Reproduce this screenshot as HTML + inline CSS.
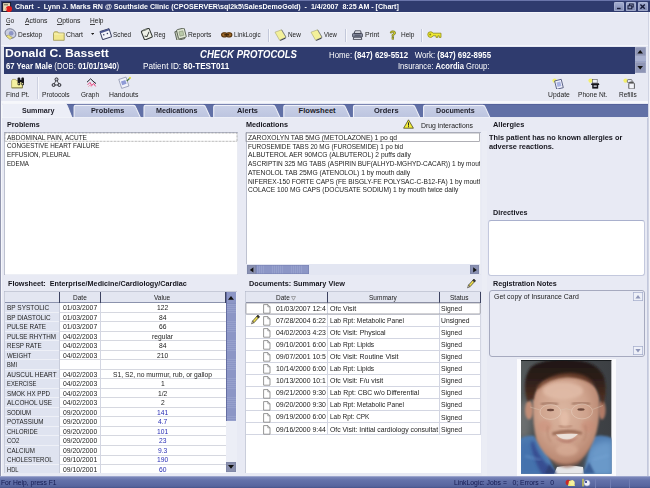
<!DOCTYPE html>
<html><head><meta charset="utf-8"><title>Chart</title>
<style>
html,body{margin:0;padding:0;background:#e5e8f3;}
body{width:650px;height:488px;position:relative;overflow:hidden;font-family:"Liberation Sans",sans-serif;}
#app{position:absolute;left:0;top:0;width:650px;height:488px;overflow:hidden;}
#app div,#app svg,#app span.t{position:absolute;}
span.t{white-space:nowrap;line-height:1;transform-origin:0 50%;}
span.t b{font-weight:bold;}
span.t u{text-decoration:underline;text-underline-offset:0.5px;text-decoration-thickness:0.6px;}
</style></head><body><div id="app">
<div style="left:0px;top:0px;width:650px;height:12.3px;background:#2f3b6e;"></div>
<div style="left:0px;top:0px;width:650px;height:0.8px;background:#6a75aa;"></div>
<div style="left:0px;top:0px;width:0.9px;height:12.3px;background:#6a75aa;"></div>
<span class="t" style="left:15.00px;top:2.93px;font-size:7.3px;color:#fff;font-weight:bold;transform:scaleX(0.9710);white-space:pre;">Chart  -  Lynn J. Marks RN @ Southside Clinic (CPOSERVER\sql2k5\SalesDemoGold)  -  1/4/2007  8:25 AM - [Chart]</span>
<svg style="left:1.6px;top:1.6px" width="11" height="10.5" viewBox="0 0 11 10.5"><rect x="0.6" y="0.6" width="8" height="9" fill="#e6d9b8" stroke="#14162c" stroke-width="1"/><rect x="2" y="2" width="4" height="1.4" fill="#8f8a70"/><circle cx="7" cy="7" r="3.1" fill="#e21a1a"/><circle cx="4" cy="7" r="1" fill="#f0a080"/></svg>
<div style="left:614.3px;top:2.2px;width:9.7px;height:8.9px;background:#929cc2;border-radius:1.6px;background:linear-gradient(#a6b0d2,#7f89b2);box-shadow:inset 0 0 0 0.5px #b9c1dc;"></div>
<div style="left:626.1px;top:2.2px;width:9.7px;height:8.9px;background:#929cc2;border-radius:1.6px;background:linear-gradient(#a6b0d2,#7f89b2);box-shadow:inset 0 0 0 0.5px #b9c1dc;"></div>
<div style="left:637.9px;top:2.2px;width:9.7px;height:8.9px;background:#929cc2;border-radius:1.6px;background:linear-gradient(#a6b0d2,#7f89b2);box-shadow:inset 0 0 0 0.5px #b9c1dc;"></div>
<svg style="left:614.3px;top:2.2px" width="34" height="9" viewBox="0 0 34 9"><rect x="3" y="5.8" width="3.6" height="1.4" fill="#151a38"/><rect x="15.4" y="2" width="3.8" height="3" fill="none" stroke="#151a38" stroke-width="1"/><rect x="14" y="3.8" width="3.8" height="3" fill="#8d97be" stroke="#151a38" stroke-width="1"/><path d="M26.4 2.4 L30.8 6.8 M30.8 2.4 L26.4 6.8" stroke="#151a38" stroke-width="1.4"/></svg>
<div style="left:0px;top:12.3px;width:650px;height:34.2px;background:#e7e9f3;"></div>
<div style="left:0px;top:12.3px;width:650px;height:0.8px;background:#f4f5fa;"></div>
<span class="t" style="left:6.00px;top:16.93px;font-size:7.3px;color:#222;transform:scaleX(0.8215);">Go</span>
<div style="left:6.2px;top:24.1px;width:4.2646px;height:0.6px;background:#444;"></div>
<span class="t" style="left:24.50px;top:16.93px;font-size:7.3px;color:#222;transform:scaleX(0.9399);">Actions</span>
<div style="left:24.7px;top:24.1px;width:4.17654px;height:0.6px;background:#444;"></div>
<span class="t" style="left:56.50px;top:16.93px;font-size:7.3px;color:#222;transform:scaleX(0.9341);">Options</span>
<div style="left:56.7px;top:24.1px;width:4.90379px;height:0.6px;background:#444;"></div>
<span class="t" style="left:90.00px;top:16.93px;font-size:7.3px;color:#222;transform:scaleX(0.8992);">Help</span>
<div style="left:90.2px;top:24.1px;width:4.34033px;height:0.6px;background:#444;"></div>
<span class="t" style="left:18.30px;top:30.93px;font-size:7.3px;color:#222;transform:scaleX(0.9037);">Desktop</span>
<span class="t" style="left:66.00px;top:30.93px;font-size:7.3px;color:#222;transform:scaleX(0.9523);">Chart</span>
<span class="t" style="left:113.00px;top:30.93px;font-size:7.3px;color:#222;transform:scaleX(0.8696);">Sched</span>
<span class="t" style="left:154.00px;top:30.93px;font-size:7.3px;color:#222;transform:scaleX(0.8512);">Reg</span>
<span class="t" style="left:188.00px;top:30.93px;font-size:7.3px;color:#222;transform:scaleX(0.9154);">Reports</span>
<span class="t" style="left:234.00px;top:30.93px;font-size:7.3px;color:#222;transform:scaleX(0.8624);">LinkLogic</span>
<span class="t" style="left:288.00px;top:30.93px;font-size:7.3px;color:#222;transform:scaleX(0.8765);">New</span>
<span class="t" style="left:324.00px;top:30.93px;font-size:7.3px;color:#222;transform:scaleX(0.8157);">View</span>
<span class="t" style="left:364.70px;top:30.93px;font-size:7.3px;color:#222;transform:scaleX(0.9527);">Print</span>
<span class="t" style="left:400.80px;top:30.93px;font-size:7.3px;color:#222;transform:scaleX(0.8925);">Help</span>
<div style="left:268px;top:28.5px;width:0.8px;height:13px;background:#c3c8da;"></div>
<div style="left:268.8px;top:28.5px;width:0.8px;height:13px;background:#f6f7fb;"></div>
<div style="left:345px;top:28.5px;width:0.8px;height:13px;background:#c3c8da;"></div>
<div style="left:345.8px;top:28.5px;width:0.8px;height:13px;background:#f6f7fb;"></div>
<div style="left:421px;top:28.5px;width:0.8px;height:13px;background:#c3c8da;"></div>
<div style="left:421.8px;top:28.5px;width:0.8px;height:13px;background:#f6f7fb;"></div>
<svg style="left:4px;top:28px" width="13" height="12" viewBox="0 0 13 12"><ellipse cx="6.5" cy="5.5" rx="5.6" ry="4.6" fill="#c9cde0" stroke="#6a6f86" stroke-width="0.8" transform="rotate(25 6.5 5.5)"/><circle cx="7.2" cy="5.2" r="2.3" fill="#8d95c4"/><path d="M2 8 L6 11.5 L8.5 9.5 L4.5 7Z" fill="#ece27d" stroke="#8a8350" stroke-width="0.5"/></svg>
<svg style="left:52.5px;top:30.5px" width="12" height="10" viewBox="0 0 12 10"><path d="M0.5 2.2 L1.5 0.8 L4.6 0.8 L5.4 2 L11.2 2 L11.2 9.3 L0.5 9.3Z" fill="#f1e78e" stroke="#9a934d" stroke-width="0.8"/><path d="M1.2 3 L10.5 3" stroke="#fbf7c8" stroke-width="0.8"/></svg>
<svg style="left:90.9px;top:33.4px" width="3.2" height="2.4" viewBox="0 0 3.2 2.4"><path d="M0 0 L3.2 0 L1.6 2Z" fill="#222"/></svg>
<svg style="left:99px;top:28px" width="13" height="12" viewBox="0 0 13 12"><g transform="rotate(-18 6.5 6)"><rect x="2" y="2" width="9.5" height="8.5" fill="#f4f5fb" stroke="#33395c" stroke-width="0.9"/><rect x="2" y="2" width="9.5" height="1.8" fill="#4a5590"/><rect x="4" y="5.5" width="1.3" height="1.3" fill="#33395c"/><rect x="7.8" y="5.5" width="1.3" height="1.3" fill="#33395c"/></g></svg>
<svg style="left:139.5px;top:28px" width="13" height="12" viewBox="0 0 13 12"><g transform="rotate(-22 6.5 6)"><rect x="2.5" y="1.5" width="8.5" height="9.5" rx="1" fill="#eef0e6" stroke="#2e3330" stroke-width="1"/><path d="M4 7.2 L6 8.6 L9.6 5" stroke="#2e3330" stroke-width="0.9" fill="none"/><rect x="4.8" y="0.6" width="4" height="1.8" fill="#777d74"/></g></svg>
<svg style="left:174px;top:28px" width="13" height="12" viewBox="0 0 13 12"><g transform="rotate(-14 6.5 6)"><rect x="1.5" y="2.5" width="8" height="9" fill="#c9d0bd" stroke="#4c5447" stroke-width="0.8"/><rect x="3.5" y="1" width="8" height="9.5" rx="1" fill="#dfe6d2" stroke="#4c5447" stroke-width="0.8"/><rect x="5.5" y="3.5" width="4" height="4.5" fill="#b9c9a8" stroke="#7d8b70" stroke-width="0.5"/></g></svg>
<svg style="left:221px;top:31.5px" width="11.5" height="6" viewBox="0 0 11.5 6"><rect x="0.6" y="0.8" width="5.6" height="4" rx="2" fill="#a56f2d" stroke="#5a350c" stroke-width="1.2"/><rect x="5.2" y="0.8" width="5.6" height="4" rx="2" fill="#a56f2d" stroke="#5a350c" stroke-width="1.2"/><rect x="3.3" y="2.1" width="4.8" height="1.4" fill="#3a2208"/></svg>
<svg style="left:273.5px;top:28.5px" width="13" height="12" viewBox="0 0 13 12"><path d="M1 3.2 L7.6 0.8 L12 8.2 L5.6 11.2Z" fill="#f3f09a" stroke="#a6a670" stroke-width="0.6"/><path d="M5.6 11.2 L12 8.2 L11.4 9.8 L6.6 11.8Z" fill="#3b3f4e"/><path d="M7.6 0.8 L12 8.2" stroke="#6b6f7e" stroke-width="0.7"/></svg>
<svg style="left:309.5px;top:28.5px" width="13" height="12" viewBox="0 0 13 12"><path d="M1 3.2 L7.6 0.8 L12 8.2 L5.6 11.2Z" fill="#f3f09a" stroke="#a6a670" stroke-width="0.6"/><path d="M5.6 11.2 L12 8.2 L11.4 9.8 L6.6 11.8Z" fill="#3b3f4e"/><path d="M7.6 0.8 L12 8.2" stroke="#6b6f7e" stroke-width="0.7"/></svg>
<svg style="left:352px;top:29.5px" width="11" height="10" viewBox="0 0 11 10"><path d="M3 0.8 L8.6 0.8 L9.2 3.4 L2.2 3.4Z" fill="#f4f5fa" stroke="#2d3140" stroke-width="0.8"/><rect x="0.6" y="3.4" width="9.8" height="3.8" rx="0.8" fill="#8b90a3" stroke="#2d3140" stroke-width="0.8"/><path d="M1.8 7.2 L9.2 7.2 L9.8 9.4 L1.2 9.4Z" fill="#e8eaf2" stroke="#2d3140" stroke-width="0.8"/><path d="M2.5 5.2 L8.5 5.2" stroke="#2d3140" stroke-width="0.7"/></svg>
<svg style="left:389px;top:29.5px" width="8" height="10" viewBox="0 0 8 10"><path d="M1.2 3 Q1.2 0.8 3.8 0.8 Q6.6 0.8 6.6 3 Q6.6 4.4 4.6 5.2 L4.6 6.6 L3 6.6 L3 4.6 Q4.8 3.9 4.8 3 Q4.8 2.2 3.8 2.2 Q2.9 2.2 2.9 3Z" fill="#d9d22e" stroke="#6d7320" stroke-width="0.7"/><rect x="3" y="7.5" width="1.7" height="1.7" fill="#d9d22e" stroke="#6d7320" stroke-width="0.6"/></svg>
<svg style="left:426.5px;top:31.3px" width="15" height="7.5" viewBox="0 0 15 7.5"><path d="M0.8 3.4 Q0.8 0.8 3.4 0.8 Q5.6 0.8 6 2.2 L14 2.2 L14 6.4 L12.2 6.4 L12.2 4.8 L10.8 4.8 L10.8 6.4 L9 6.4 L9 4.8 L6 4.8 Q5.4 6.4 3.4 6.4 Q0.8 6.4 0.8 3.4Z" fill="#efe92f" stroke="#8d8a1c" stroke-width="0.8"/><circle cx="3.2" cy="3.5" r="1" fill="#8d8a1c"/></svg>
<div style="left:4px;top:46.5px;width:631.2px;height:27px;background:#2f3b6e;"></div>
<div style="left:0px;top:45.3px;width:650px;height:1.2px;background:#f3f4f9;"></div>
<span class="t" style="left:5.00px;top:48.24px;font-size:11.8px;color:#fff;font-weight:bold;transform:scaleX(1.0280);">Donald C. Bassett</span>
<span class="t" style="left:6.00px;top:62.35px;font-size:8.5px;color:#fff;transform:scaleX(0.9081);"><b>67 Year Male</b> (DOB: <b>01/01/1940</b>)</span>
<span class="t" style="left:143.00px;top:62.35px;font-size:8.5px;color:#fff;transform:scaleX(0.9597);">Patient ID: <b>80-TEST011</b></span>
<span class="t" style="left:199.50px;top:49.72px;font-size:10px;color:#fff;font-weight:bold;font-style:italic;transform:scaleX(0.9557);">CHECK PROTOCOLS</span>
<span class="t" style="left:329.00px;top:50.85px;font-size:8.5px;color:#fff;transform:scaleX(0.9250);white-space:pre;">Home: <b>(847) 629-5512</b>   Work: <b>(847) 692-8955</b></span>
<span class="t" style="left:397.50px;top:62.35px;font-size:8.5px;color:#fff;transform:scaleX(0.8942);">Insurance: <b>Acordia</b> Group:</span>
<div style="left:635.4px;top:46.6px;width:10.4px;height:26.2px;background:#a9b1d0;background:repeating-linear-gradient(#a9b1d0 0,#a9b1d0 1.2px,#9aa3c6 1.2px,#9aa3c6 1.9px);"></div>
<div style="left:635.4px;top:46.6px;width:10.4px;height:9px;background:#8e95b5;box-shadow:inset 0 0 0 0.6px #a8aec8;"></div>
<div style="left:635.4px;top:62.2px;width:10.4px;height:10.6px;background:#8e95b5;box-shadow:inset 0 0 0 0.6px #a8aec8;"></div>
<svg style="left:635.4px;top:46.6px" width="10.4" height="9" viewBox="0 0 10.4 9"><path d="M2.4 6.4 L8 6.4 L5.2 3Z" fill="#111"/></svg>
<svg style="left:635.4px;top:62.2px" width="10.4" height="10.6" viewBox="0 0 10.4 10.6"><path d="M2.4 4 L8 4 L5.2 7.6Z" fill="#111"/></svg>
<div style="left:0px;top:74px;width:650px;height:27px;background:#e7e9f3;"></div>
<span class="t" style="left:5.80px;top:91.03px;font-size:7.3px;color:#222;transform:scaleX(0.9342);">Find Pt.</span>
<span class="t" style="left:42.00px;top:91.03px;font-size:7.3px;color:#222;transform:scaleX(0.9103);">Protocols</span>
<span class="t" style="left:81.30px;top:91.03px;font-size:7.3px;color:#222;transform:scaleX(0.8872);">Graph</span>
<span class="t" style="left:108.50px;top:91.03px;font-size:7.3px;color:#222;transform:scaleX(0.9408);">Handouts</span>
<span class="t" style="left:547.50px;top:91.03px;font-size:7.3px;color:#222;transform:scaleX(0.9261);">Update</span>
<span class="t" style="left:578.00px;top:91.03px;font-size:7.3px;color:#222;transform:scaleX(0.9087);">Phone Nt.</span>
<span class="t" style="left:619.00px;top:91.03px;font-size:7.3px;color:#222;transform:scaleX(0.8905);">Refills</span>
<div style="left:37px;top:76.5px;width:0.8px;height:22px;background:#cdd1e0;"></div>
<div style="left:37.8px;top:76.5px;width:0.8px;height:22px;background:#f6f7fb;"></div>
<svg style="left:11px;top:77.4px" width="14.5" height="11.6" viewBox="0 0 14.5 11.6"><path d="M0.6 3.8 L1.6 2.4 L4.6 2.4 L5.4 3.6 L11.4 3.6 L11.4 10.8 L0.6 10.8Z" fill="#f5f1a0" stroke="#a19a52" stroke-width="0.7"/><path d="M0.8 10.9 L11.5 10.9 L11.5 4" stroke="#6e6a36" stroke-width="0.7" fill="none"/><rect x="6.6" y="0.6" width="2.6" height="7.6" rx="0.9" fill="#15151b"/><rect x="10.4" y="0.6" width="2.6" height="7.6" rx="0.9" fill="#15151b"/><rect x="8.6" y="2.8" width="2.4" height="2.2" fill="#15151b"/><rect x="7.2" y="6" width="1.2" height="1.4" fill="#d8d48a"/><rect x="11" y="6" width="1.2" height="1.4" fill="#d8d48a"/></svg>
<svg style="left:50.5px;top:76.8px" width="11" height="10.5" viewBox="0 0 11 10.5"><path d="M5.5 2.5 L2.6 8 L8.4 8Z" stroke="#333" stroke-width="0.8" fill="none"/><circle cx="5.5" cy="2.4" r="1.5" fill="#c9ccd8" stroke="#1c1c22" stroke-width="0.9"/><circle cx="2.6" cy="8" r="1.5" fill="#c9ccd8" stroke="#1c1c22" stroke-width="0.9"/><circle cx="8.4" cy="8" r="1.5" fill="#c9ccd8" stroke="#1c1c22" stroke-width="0.9"/></svg>
<svg style="left:85.8px;top:77.6px" width="11" height="10.5" viewBox="0 0 11 10.5"><path d="M1 4.2 L4.6 0.8 L7 3.2 L10 5.6" stroke="#1c1c26" stroke-width="1" fill="none"/><path d="M1.6 6.8 L4 4.4 L5.8 7.6 L7.6 5.4 L9.6 8.4" stroke="#e8306e" stroke-width="0.9" fill="none"/><path d="M2.2 8.8 L4 7 L5.6 9.2" stroke="#f08aa8" stroke-width="0.7" fill="none"/></svg>
<svg style="left:117.5px;top:76.4px" width="13.5" height="12.4" viewBox="0 0 13.5 12.4"><g transform="rotate(-18 6 6.5)"><rect x="2" y="2" width="7.6" height="9.4" fill="#f0f2fa" stroke="#8a90ac" stroke-width="0.7"/><rect x="3.4" y="4.6" width="4.6" height="4" fill="#8f9bd6"/></g><path d="M8.4 4.6 L11.6 1.6 L12.4 2.4 L9.2 5.4Z" fill="#4b7a3b"/><circle cx="12" cy="1.8" r="1.1" fill="#e6e04a"/></svg>
<svg style="left:552px;top:77.5px" width="12.5" height="11.5" viewBox="0 0 12.5 11.5"><circle cx="2.6" cy="2.6" r="2.2" fill="#f3ef6a"/><g transform="rotate(-14 7 6.5)"><rect x="3.6" y="2" width="6.8" height="8.6" fill="#eef0fa" stroke="#4a5078" stroke-width="0.8"/><rect x="5" y="4" width="4" height="4.6" fill="#a9b3e2"/></g></svg>
<svg style="left:587.5px;top:77.5px" width="12.5" height="11.5" viewBox="0 0 12.5 11.5"><circle cx="2.6" cy="2.6" r="2.2" fill="#f3ef6a"/><rect x="4.6" y="1.4" width="4.6" height="3.6" fill="#eef0fa" stroke="#555" stroke-width="0.6"/><path d="M3.6 5.2 L10.8 5.2 L11.4 7 L3 7Z" fill="#15151a"/><rect x="4.2" y="6.8" width="6" height="3.8" fill="#15151a"/><rect x="5.6" y="7.4" width="3.2" height="1.4" fill="#d5d7e2"/></svg>
<svg style="left:622.5px;top:77.5px" width="12.5" height="11.5" viewBox="0 0 12.5 11.5"><circle cx="2.6" cy="2.6" r="2.2" fill="#f3ef6a"/><rect x="4.4" y="1.6" width="4.6" height="3" rx="0.8" fill="#eef0fa" stroke="#444" stroke-width="0.7"/><rect x="5.8" y="5" width="5.6" height="6" rx="0.8" fill="#f2f3f9" stroke="#333" stroke-width="0.8"/><rect x="6.6" y="3.6" width="4" height="1.6" fill="#555"/></svg>
<div style="left:0px;top:100.6px;width:650px;height:0.8px;background:#b9bed3;"></div>
<div style="left:0px;top:101.4px;width:650px;height:1.4px;background:#f6f7fb;"></div>
<div style="left:2px;top:103.7px;width:646px;height:13.7px;background:#6170a6;box-shadow:inset 0 0.8px 0 0 #525e97;"></div>
<div style="left:0px;top:102.8px;width:2.3px;height:374px;background:#f6f7fb;"></div>
<div style="left:0px;top:12.3px;width:0.9px;height:464px;background:#9296ae;"></div>
<svg style="left:0px;top:103px" width="650" height="15" viewBox="0 0 650 15"><defs><linearGradient id="tabg" x1="0" y1="0" x2="0" y2="1"><stop offset="0" stop-color="#c9d0e7"/><stop offset="1" stop-color="#bcc4df"/></linearGradient></defs><path d="M2 15 L2 2 Q2 0.4 3.6 0.4 L64.6 0.4 Q66.4 0.4 67.2 2.4 L72.2 15Z" fill="#eceef7" stroke="#fafafd" stroke-width="0.8"/><path d="M74.1 14.6 L74.1 4 Q74.1 2.4 75.7 2.4 L133.3 2.4 Q135.1 2.4 135.8 4.4 L140.4 14.6Z" fill="url(#tabg)" stroke="#eef0f8" stroke-width="1.1"/><path d="M144 14.6 L144 4 Q144 2.4 145.6 2.4 L203.2 2.4 Q205 2.4 205.7 4.4 L210.3 14.6Z" fill="url(#tabg)" stroke="#eef0f8" stroke-width="1.1"/><path d="M213.7 14.6 L213.7 4 Q213.7 2.4 215.3 2.4 L272.9 2.4 Q274.7 2.4 275.4 4.4 L280 14.6Z" fill="url(#tabg)" stroke="#eef0f8" stroke-width="1.1"/><path d="M283.8 14.6 L283.8 4 Q283.8 2.4 285.4 2.4 L343 2.4 Q344.8 2.4 345.5 4.4 L350.1 14.6Z" fill="url(#tabg)" stroke="#eef0f8" stroke-width="1.1"/><path d="M353.5 14.6 L353.5 4 Q353.5 2.4 355.1 2.4 L412.7 2.4 Q414.5 2.4 415.2 4.4 L419.8 14.6Z" fill="url(#tabg)" stroke="#eef0f8" stroke-width="1.1"/><path d="M423.6 14.6 L423.6 4 Q423.6 2.4 425.2 2.4 L482.8 2.4 Q484.6 2.4 485.3 4.4 L489.9 14.6Z" fill="url(#tabg)" stroke="#eef0f8" stroke-width="1.1"/></svg>
<span class="t" style="left:21.65px;top:106.69px;font-size:7.6px;color:#1d1d28;font-weight:bold;transform:scaleX(0.9383);">Summary</span>
<span class="t" style="left:90.55px;top:106.69px;font-size:7.6px;color:#1d1d28;font-weight:bold;transform:scaleX(0.9615);">Problems</span>
<span class="t" style="left:156.00px;top:106.69px;font-size:7.6px;color:#1d1d28;font-weight:bold;transform:scaleX(0.9426);">Medications</span>
<span class="t" style="left:236.50px;top:106.69px;font-size:7.6px;color:#1d1d28;font-weight:bold;transform:scaleX(0.9748);">Alerts</span>
<span class="t" style="left:298.50px;top:106.69px;font-size:7.6px;color:#1d1d28;font-weight:bold;">Flowsheet</span>
<span class="t" style="left:373.70px;top:106.69px;font-size:7.6px;color:#1d1d28;font-weight:bold;transform:scaleX(0.9871);">Orders</span>
<span class="t" style="left:436.35px;top:106.69px;font-size:7.6px;color:#1d1d28;font-weight:bold;transform:scaleX(0.9351);">Documents</span>
<div style="left:2px;top:117.6px;width:645.5px;height:359px;background:#e8eaf4;"></div>
<div style="left:647.6px;top:12.3px;width:2.4px;height:464px;background:#f1f2f8;"></div>
<div style="left:647.5px;top:12.3px;width:0.6px;height:464px;background:#d0d4e3;"></div>
<div style="left:646.6px;top:117.6px;width:0.9px;height:359px;background:#c3c8dc;"></div>
<div style="left:481.5px;top:131px;width:5.5px;height:345px;background:#ebedf5;"></div>
<span class="t" style="left:7.40px;top:120.59px;font-size:7.6px;color:#16161e;font-weight:bold;transform:scaleX(0.9441);">Problems</span>
<span class="t" style="left:246.40px;top:120.59px;font-size:7.6px;color:#16161e;font-weight:bold;transform:scaleX(0.9563);">Medications</span>
<span class="t" style="left:493.00px;top:120.59px;font-size:7.6px;color:#16161e;font-weight:bold;transform:scaleX(0.9750);">Allergies</span>
<span class="t" style="left:421.00px;top:121.93px;font-size:7.3px;color:#222;transform:scaleX(0.9423);">Drug interactions</span>
<svg style="left:403px;top:119px" width="11" height="10" viewBox="0 0 11 10"><path d="M5.5 0.8 L10.4 9.2 L0.6 9.2Z" fill="#f4ee3a" stroke="#4a4a20" stroke-width="0.8" stroke-linejoin="round"/><rect x="5" y="3.4" width="1" height="3.2" fill="#222"/><rect x="5" y="7.2" width="1" height="1" fill="#222"/></svg>
<div style="left:4px;top:132px;width:233.7px;height:143.3px;background:#fff;box-shadow:inset 0.7px 0.7px 0 0 #a3a8bd, inset -0.6px -0.6px 0 0 #dcdfeb;"></div>
<div style="left:245.5px;top:132px;width:235px;height:143.3px;background:#fff;box-shadow:inset 0.7px 0.7px 0 0 #a3a8bd, inset -0.6px -0.6px 0 0 #dcdfeb;"></div>
<svg style="left:3.9px;top:132px" width="234" height="10.3"><rect x="1" y="1" width="232" height="8.3" rx="0" fill="none" stroke="#555" stroke-width="0.6" stroke-dasharray="0.7 0.7"/></svg>
<svg style="left:245.4px;top:131.5px" width="235.4" height="10.6"><rect x="1" y="1" width="233.4" height="8.6" rx="0" fill="none" stroke="#8e8e96" stroke-width="0.7"/></svg>
<span class="t" style="left:6.80px;top:133.73px;font-size:7.3px;color:#222;transform:scaleX(0.8924);">ABDOMINAL PAIN, ACUTE</span>
<span class="t" style="left:6.80px;top:142.48px;font-size:7.3px;color:#222;transform:scaleX(0.8659);">CONGESTIVE HEART FAILURE</span>
<span class="t" style="left:6.80px;top:151.23px;font-size:7.3px;color:#222;transform:scaleX(0.8554);">EFFUSION, PLEURAL</span>
<span class="t" style="left:6.80px;top:159.98px;font-size:7.3px;color:#222;transform:scaleX(0.8474);">EDEMA</span>
<div style="left:246.5px;top:133px;width:233.3px;height:131px;overflow:hidden">
<span class="t" style="left:1.30px;top:0.93px;font-size:7.3px;color:#222;transform:scaleX(0.9242);">ZAROXOLYN TAB 5MG (METOLAZONE) 1 po qd</span>
<span class="t" style="left:1.30px;top:9.68px;font-size:7.3px;color:#222;transform:scaleX(0.8783);">FUROSEMIDE TABS 20 MG (FUROSEMIDE) 1 po bid</span>
<span class="t" style="left:1.30px;top:18.43px;font-size:7.3px;color:#222;transform:scaleX(0.9146);">ALBUTEROL AER 90MCG (ALBUTEROL) 2 puffs daily</span>
<span class="t" style="left:1.30px;top:27.18px;font-size:7.3px;color:#222;transform:scaleX(0.8916);">ASCRIPTIN 325 MG TABS (ASPIRIN BUF(ALHYD-MGHYD-CACAR)) 1 by mouth</span>
<span class="t" style="left:1.30px;top:35.93px;font-size:7.3px;color:#222;transform:scaleX(0.9212);">ATENOLOL TAB 25MG (ATENOLOL) 1 by mouth daily</span>
<span class="t" style="left:1.30px;top:44.68px;font-size:7.3px;color:#222;transform:scaleX(0.9066);">NIFEREX-150 FORTE CAPS (FE BISGLY-FE POLYSAC-C-B12-FA) 1 by mouth</span>
<span class="t" style="left:1.30px;top:53.43px;font-size:7.3px;color:#222;transform:scaleX(0.9068);">COLACE 100 MG CAPS (DOCUSATE SODIUM) 1 by mouth twice daily</span>
</div>
<div style="left:246.3px;top:264.4px;width:233.5px;height:10.2px;background:#e3e6f2;"></div>
<div style="left:246.6px;top:264.6px;width:9.6px;height:9.8px;background:#8a91b2;box-shadow:inset 0 0 0 0.6px #7b82a4;"></div>
<div style="left:256.2px;top:264.6px;width:53px;height:9.8px;background:#8c96c6;background:repeating-linear-gradient(90deg,#8c96c6 0,#8c96c6 1.3px,#97a1cd 1.3px,#97a1cd 1.9px);box-shadow:inset 0 0 0 0.6px #7680b2;"></div>
<div style="left:469.8px;top:264.6px;width:9.6px;height:9.8px;background:#8a91b2;box-shadow:inset 0 0 0 0.6px #7b82a4;"></div>
<svg style="left:246.6px;top:264.6px" width="9.6" height="9.8" viewBox="0 0 9.6 9.8"><path d="M6.4 2.2 L6.4 7.6 L2.8 4.9Z" fill="#111"/></svg>
<svg style="left:469.8px;top:264.6px" width="9.6" height="9.8" viewBox="0 0 9.6 9.8"><path d="M3.2 2.2 L3.2 7.6 L6.8 4.9Z" fill="#111"/></svg>
<span class="t" style="left:489.00px;top:133.78px;font-size:7.2px;color:#16161e;font-weight:bold;transform:scaleX(1.0204);">This patient has no known allergies or</span>
<span class="t" style="left:489.00px;top:143.08px;font-size:7.2px;color:#16161e;font-weight:bold;transform:scaleX(1.0279);">adverse reactions.</span>
<span class="t" style="left:493.00px;top:208.59px;font-size:7.6px;color:#16161e;font-weight:bold;transform:scaleX(0.9495);">Directives</span>
<div style="left:487.6px;top:219.7px;width:157.3px;height:56.6px;background:#fff;border:0.8px solid #c3c8dd;border-top-color:#a9b0cd;border-radius:3px;box-sizing:border-box;"></div>
<span class="t" style="left:493.00px;top:280.29px;font-size:7.6px;color:#16161e;font-weight:bold;transform:scaleX(0.9442);">Registration Notes</span>
<div style="left:488.6px;top:289.8px;width:156.2px;height:66.8px;background:#e8eaf4;border:0.9px solid #a6aabf;border-radius:3px;box-sizing:border-box;"></div>
<span class="t" style="left:493.50px;top:292.68px;font-size:7.2px;color:#222;transform:scaleX(0.9654);">Get copy of Insurance Card</span>
<div style="left:633.3px;top:292px;width:10px;height:9.3px;background:#eef0f8;box-shadow:inset 0 0 0 0.7px #a5adcb;"></div>
<div style="left:633.3px;top:346px;width:10px;height:9.3px;background:#eef0f8;box-shadow:inset 0 0 0 0.7px #a5adcb;"></div>
<svg style="left:633.3px;top:292px" width="10" height="9.3" viewBox="0 0 10 9.3"><path d="M2.4 6.4 L7.6 6.4 L5 3Z" fill="#8e96b8"/></svg>
<svg style="left:633.3px;top:346px" width="10" height="9.3" viewBox="0 0 10 9.3"><path d="M2.4 3 L7.6 3 L5 6.4Z" fill="#8e96b8"/></svg>
<span class="t" style="left:7.50px;top:280.29px;font-size:7.6px;color:#16161e;font-weight:bold;transform:scaleX(0.9525);white-space:pre;">Flowsheet:  Enterprise/Medicine/Cardiology/Cardiac</span>
<div style="left:4px;top:291.3px;width:233px;height:181.5px;background:#fff;box-shadow:inset 0.7px 0.7px 0 0 #b4b9cc;"></div>
<div style="left:4.8px;top:292.1px;width:220.7px;height:10.6px;background:#e3e6f1;"></div>
<div style="left:4.8px;top:302.3px;width:220.7px;height:0.8px;background:#8c93ad;"></div>
<div style="left:59px;top:292.1px;width:0.9px;height:10.9px;background:#3c4260;"></div>
<div style="left:100px;top:292.1px;width:0.9px;height:10.9px;background:#3c4260;"></div>
<div style="left:224.6px;top:292.1px;width:0.9px;height:10.9px;background:#3c4260;"></div>
<span class="t" style="left:72.92px;top:294.33px;font-size:7.3px;color:#222;transform:scaleX(0.8918);">Date</span>
<span class="t" style="left:154.42px;top:294.33px;font-size:7.3px;color:#222;transform:scaleX(0.8918);">Value</span>
<div style="left:4.8px;top:303px;width:221.6px;height:169.8px;overflow:hidden">
<div style="left:0px;top:0px;width:54.2px;height:9.52px;background:#dfe3f0;"></div>
<div style="left:0px;top:8.72px;width:54.2px;height:0.8px;background:#eef0f7;"></div>
<div style="left:54.2px;top:8.72px;width:167.5px;height:0.8px;background:#d6d8e0;"></div>
<span class="t" style="left:2.00px;top:1.03px;font-size:7.3px;color:#222;transform:scaleX(0.8885);">BP SYSTOLIC</span>
<span class="t" style="left:58.00px;top:1.03px;font-size:7.3px;color:#222;transform:scaleX(0.9361);">01/03/2007</span>
<span class="t" style="left:152.09px;top:1.03px;font-size:7.3px;color:#222;transform:scaleX(0.9205);">122</span>
<div style="left:0px;top:9.52px;width:54.2px;height:9.52px;background:#dfe3f0;"></div>
<div style="left:0px;top:18.24px;width:54.2px;height:0.8px;background:#eef0f7;"></div>
<div style="left:54.2px;top:18.24px;width:167.5px;height:0.8px;background:#d6d8e0;"></div>
<span class="t" style="left:2.00px;top:10.55px;font-size:7.3px;color:#222;transform:scaleX(0.8713);">BP DIASTOLIC</span>
<span class="t" style="left:58.00px;top:10.55px;font-size:7.3px;color:#222;transform:scaleX(0.9361);">01/03/2007</span>
<span class="t" style="left:153.96px;top:10.55px;font-size:7.3px;color:#222;transform:scaleX(0.9205);">84</span>
<div style="left:0px;top:19.04px;width:54.2px;height:9.52px;background:#dfe3f0;"></div>
<div style="left:0px;top:27.76px;width:54.2px;height:0.8px;background:#eef0f7;"></div>
<div style="left:54.2px;top:27.76px;width:167.5px;height:0.8px;background:#d6d8e0;"></div>
<span class="t" style="left:2.00px;top:20.07px;font-size:7.3px;color:#222;transform:scaleX(0.8687);">PULSE RATE</span>
<span class="t" style="left:58.00px;top:20.07px;font-size:7.3px;color:#222;transform:scaleX(0.9361);">01/03/2007</span>
<span class="t" style="left:153.96px;top:20.07px;font-size:7.3px;color:#222;transform:scaleX(0.9205);">66</span>
<div style="left:0px;top:28.56px;width:54.2px;height:9.52px;background:#dfe3f0;"></div>
<div style="left:0px;top:37.28px;width:54.2px;height:0.8px;background:#eef0f7;"></div>
<div style="left:54.2px;top:37.28px;width:167.5px;height:0.8px;background:#d6d8e0;"></div>
<span class="t" style="left:2.00px;top:29.59px;font-size:7.3px;color:#222;transform:scaleX(0.8585);">PULSE RHYTHM</span>
<span class="t" style="left:58.00px;top:29.59px;font-size:7.3px;color:#222;transform:scaleX(0.9361);">04/02/2003</span>
<span class="t" style="left:147.24px;top:29.59px;font-size:7.3px;color:#222;transform:scaleX(0.9205);">regular</span>
<div style="left:0px;top:38.08px;width:54.2px;height:9.52px;background:#dfe3f0;"></div>
<div style="left:0px;top:46.8px;width:54.2px;height:0.8px;background:#eef0f7;"></div>
<div style="left:54.2px;top:46.8px;width:167.5px;height:0.8px;background:#d6d8e0;"></div>
<span class="t" style="left:2.00px;top:39.11px;font-size:7.3px;color:#222;transform:scaleX(0.8549);">RESP RATE</span>
<span class="t" style="left:58.00px;top:39.11px;font-size:7.3px;color:#222;transform:scaleX(0.9361);">04/02/2003</span>
<span class="t" style="left:153.96px;top:39.11px;font-size:7.3px;color:#222;transform:scaleX(0.9205);">84</span>
<div style="left:0px;top:47.6px;width:54.2px;height:9.52px;background:#dfe3f0;"></div>
<div style="left:0px;top:56.32px;width:54.2px;height:0.8px;background:#eef0f7;"></div>
<div style="left:54.2px;top:56.32px;width:167.5px;height:0.8px;background:#d6d8e0;"></div>
<span class="t" style="left:2.00px;top:48.63px;font-size:7.3px;color:#222;transform:scaleX(0.8323);">WEIGHT</span>
<span class="t" style="left:58.00px;top:48.63px;font-size:7.3px;color:#222;transform:scaleX(0.9361);">04/02/2003</span>
<span class="t" style="left:152.09px;top:48.63px;font-size:7.3px;color:#222;transform:scaleX(0.9205);">210</span>
<div style="left:0px;top:57.12px;width:54.2px;height:9.52px;background:#dfe3f0;"></div>
<div style="left:0px;top:65.84px;width:54.2px;height:0.8px;background:#eef0f7;"></div>
<div style="left:54.2px;top:65.84px;width:167.5px;height:0.8px;background:#d6d8e0;"></div>
<span class="t" style="left:2.00px;top:58.15px;font-size:7.3px;color:#222;transform:scaleX(0.7859);">BMI</span>
<div style="left:0px;top:66.64px;width:54.2px;height:9.52px;background:#dfe3f0;"></div>
<div style="left:0px;top:75.36px;width:54.2px;height:0.8px;background:#eef0f7;"></div>
<div style="left:54.2px;top:75.36px;width:167.5px;height:0.8px;background:#d6d8e0;"></div>
<span class="t" style="left:2.00px;top:67.67px;font-size:7.3px;color:#222;transform:scaleX(0.8860);">AUSCUL HEART</span>
<span class="t" style="left:58.00px;top:67.67px;font-size:7.3px;color:#222;transform:scaleX(0.9361);">04/02/2003</span>
<span class="t" style="left:108.21px;top:67.67px;font-size:7.3px;color:#222;transform:scaleX(0.9205);">S1, S2, no murmur, rub, or gallop</span>
<div style="left:0px;top:76.16px;width:54.2px;height:9.52px;background:#dfe3f0;"></div>
<div style="left:0px;top:84.88px;width:54.2px;height:0.8px;background:#eef0f7;"></div>
<div style="left:54.2px;top:84.88px;width:167.5px;height:0.8px;background:#d6d8e0;"></div>
<span class="t" style="left:2.00px;top:77.19px;font-size:7.3px;color:#222;transform:scaleX(0.7963);">EXERCISE</span>
<span class="t" style="left:58.00px;top:77.19px;font-size:7.3px;color:#222;transform:scaleX(0.9361);">04/02/2003</span>
<span class="t" style="left:155.83px;top:77.19px;font-size:7.3px;color:#222;transform:scaleX(0.9205);">1</span>
<div style="left:0px;top:85.68px;width:54.2px;height:9.52px;background:#dfe3f0;"></div>
<div style="left:0px;top:94.4px;width:54.2px;height:0.8px;background:#eef0f7;"></div>
<div style="left:54.2px;top:94.4px;width:167.5px;height:0.8px;background:#d6d8e0;"></div>
<span class="t" style="left:2.00px;top:86.71px;font-size:7.3px;color:#222;transform:scaleX(0.8480);">SMOK HX PPD</span>
<span class="t" style="left:58.00px;top:86.71px;font-size:7.3px;color:#222;transform:scaleX(0.9361);">04/02/2003</span>
<span class="t" style="left:153.03px;top:86.71px;font-size:7.3px;color:#222;transform:scaleX(0.9205);">1/2</span>
<div style="left:0px;top:95.2px;width:54.2px;height:9.52px;background:#dfe3f0;"></div>
<div style="left:0px;top:103.92px;width:54.2px;height:0.8px;background:#eef0f7;"></div>
<div style="left:54.2px;top:103.92px;width:167.5px;height:0.8px;background:#d6d8e0;"></div>
<span class="t" style="left:2.00px;top:96.23px;font-size:7.3px;color:#222;transform:scaleX(0.8731);">ALCOHOL USE</span>
<span class="t" style="left:58.00px;top:96.23px;font-size:7.3px;color:#222;transform:scaleX(0.9361);">04/02/2003</span>
<span class="t" style="left:155.83px;top:96.23px;font-size:7.3px;color:#222;transform:scaleX(0.9205);">2</span>
<div style="left:0px;top:104.72px;width:54.2px;height:9.52px;background:#dfe3f0;"></div>
<div style="left:0px;top:113.44px;width:54.2px;height:0.8px;background:#eef0f7;"></div>
<div style="left:54.2px;top:113.44px;width:167.5px;height:0.8px;background:#d6d8e0;"></div>
<span class="t" style="left:2.00px;top:105.75px;font-size:7.3px;color:#222;transform:scaleX(0.8253);">SODIUM</span>
<span class="t" style="left:58.00px;top:105.75px;font-size:7.3px;color:#222;transform:scaleX(0.9361);">09/20/2000</span>
<span class="t" style="left:152.09px;top:105.75px;font-size:7.3px;color:#2a2fb5;transform:scaleX(0.9205);">141</span>
<div style="left:0px;top:114.24px;width:54.2px;height:9.52px;background:#dfe3f0;"></div>
<div style="left:0px;top:122.96px;width:54.2px;height:0.8px;background:#eef0f7;"></div>
<div style="left:54.2px;top:122.96px;width:167.5px;height:0.8px;background:#d6d8e0;"></div>
<span class="t" style="left:2.00px;top:115.27px;font-size:7.3px;color:#222;transform:scaleX(0.8574);">POTASSIUM</span>
<span class="t" style="left:58.00px;top:115.27px;font-size:7.3px;color:#222;transform:scaleX(0.9361);">09/20/2000</span>
<span class="t" style="left:153.03px;top:115.27px;font-size:7.3px;color:#2a2fb5;transform:scaleX(0.9205);">4.7</span>
<div style="left:0px;top:123.76px;width:54.2px;height:9.52px;background:#dfe3f0;"></div>
<div style="left:0px;top:132.48px;width:54.2px;height:0.8px;background:#eef0f7;"></div>
<div style="left:54.2px;top:132.48px;width:167.5px;height:0.8px;background:#d6d8e0;"></div>
<span class="t" style="left:2.00px;top:124.79px;font-size:7.3px;color:#222;transform:scaleX(0.8138);">CHLORIDE</span>
<span class="t" style="left:58.00px;top:124.79px;font-size:7.3px;color:#222;transform:scaleX(0.9361);">09/20/2000</span>
<span class="t" style="left:152.09px;top:124.79px;font-size:7.3px;color:#2a2fb5;transform:scaleX(0.9205);">101</span>
<div style="left:0px;top:133.28px;width:54.2px;height:9.52px;background:#dfe3f0;"></div>
<div style="left:0px;top:142px;width:54.2px;height:0.8px;background:#eef0f7;"></div>
<div style="left:54.2px;top:142px;width:167.5px;height:0.8px;background:#d6d8e0;"></div>
<span class="t" style="left:2.00px;top:134.31px;font-size:7.3px;color:#222;transform:scaleX(0.8195);">CO2</span>
<span class="t" style="left:58.00px;top:134.31px;font-size:7.3px;color:#222;transform:scaleX(0.9361);">09/20/2000</span>
<span class="t" style="left:153.96px;top:134.31px;font-size:7.3px;color:#2a2fb5;transform:scaleX(0.9205);">23</span>
<div style="left:0px;top:142.8px;width:54.2px;height:9.52px;background:#dfe3f0;"></div>
<div style="left:0px;top:151.52px;width:54.2px;height:0.8px;background:#eef0f7;"></div>
<div style="left:54.2px;top:151.52px;width:167.5px;height:0.8px;background:#d6d8e0;"></div>
<span class="t" style="left:2.00px;top:143.83px;font-size:7.3px;color:#222;transform:scaleX(0.8462);">CALCIUM</span>
<span class="t" style="left:58.00px;top:143.83px;font-size:7.3px;color:#222;transform:scaleX(0.9361);">09/20/2000</span>
<span class="t" style="left:153.03px;top:143.83px;font-size:7.3px;color:#2a2fb5;transform:scaleX(0.9205);">9.3</span>
<div style="left:0px;top:152.32px;width:54.2px;height:9.52px;background:#dfe3f0;"></div>
<div style="left:0px;top:161.04px;width:54.2px;height:0.8px;background:#eef0f7;"></div>
<div style="left:54.2px;top:161.04px;width:167.5px;height:0.8px;background:#d6d8e0;"></div>
<span class="t" style="left:2.00px;top:153.35px;font-size:7.3px;color:#222;transform:scaleX(0.8389);">CHOLESTEROL</span>
<span class="t" style="left:58.00px;top:153.35px;font-size:7.3px;color:#222;transform:scaleX(0.9361);">09/10/2001</span>
<span class="t" style="left:152.09px;top:153.35px;font-size:7.3px;color:#2a2fb5;transform:scaleX(0.9205);">190</span>
<div style="left:0px;top:161.84px;width:54.2px;height:9.52px;background:#dfe3f0;"></div>
<div style="left:0px;top:170.56px;width:54.2px;height:0.8px;background:#eef0f7;"></div>
<div style="left:54.2px;top:170.56px;width:167.5px;height:0.8px;background:#d6d8e0;"></div>
<span class="t" style="left:2.00px;top:162.87px;font-size:7.3px;color:#222;transform:scaleX(0.7875);">HDL</span>
<span class="t" style="left:58.00px;top:162.87px;font-size:7.3px;color:#222;transform:scaleX(0.9361);">09/10/2001</span>
<span class="t" style="left:153.96px;top:162.87px;font-size:7.3px;color:#2a2fb5;transform:scaleX(0.9205);">60</span>
<div style="left:54.2px;top:0px;width:0.8px;height:200px;background:#c9cddb;"></div>
<div style="left:95.2px;top:0px;width:0.8px;height:200px;background:#d3d6e2;"></div>
</div>
<div style="left:225.8px;top:292.1px;width:11.2px;height:181px;background:#eceef6;"></div>
<div style="left:226.2px;top:292.1px;width:10.3px;height:10.6px;background:#8c96c6;box-shadow:inset 0.8px 0 0 0 #5a6398;"></div>
<div style="left:226.2px;top:302.6px;width:10.3px;height:118px;background:#8c96c6;background:repeating-linear-gradient(#8c96c6 0,#8c96c6 1.3px,#97a1cd 1.3px,#97a1cd 1.9px);box-shadow:inset 0.8px 0 0 0 #5a6398, inset 0 0.6px 0 0 #7d87b8;"></div>
<div style="left:226.2px;top:462.4px;width:10.3px;height:9.6px;background:#8a90ad;box-shadow:inset 0 0 0 0.6px #7b82a4;"></div>
<svg style="left:226.3px;top:292.5px" width="10" height="9.6" viewBox="0 0 10 9.6"><path d="M2 6.8 L8 6.8 L5 3Z" fill="#111"/></svg>
<svg style="left:226.3px;top:462.4px" width="10" height="9.6" viewBox="0 0 10 9.6"><path d="M2 3 L8 3 L5 6.8Z" fill="#111"/></svg>
<span class="t" style="left:248.70px;top:280.29px;font-size:7.6px;color:#16161e;font-weight:bold;transform:scaleX(0.9604);">Documents: Summary View</span>
<div style="left:244.7px;top:291.3px;width:236px;height:182px;background:#fff;box-shadow:inset 0.7px 0.7px 0 0 #b4b9cc;"></div>
<div style="left:245.5px;top:292.1px;width:235px;height:10.6px;background:#e3e6f1;"></div>
<div style="left:245.5px;top:302.2px;width:234.4px;height:0.8px;background:#8c93ad;"></div>
<div style="left:327px;top:292.1px;width:0.9px;height:10.9px;background:#3c4260;"></div>
<div style="left:439px;top:292.1px;width:0.9px;height:10.9px;background:#3c4260;"></div>
<div style="left:480px;top:292.1px;width:0.9px;height:10.9px;background:#3c4260;"></div>
<span class="t" style="left:276.00px;top:294.33px;font-size:7.3px;color:#222;transform:scaleX(0.8918);">Date</span>
<svg style="left:291.3px;top:295.8px" width="5" height="5" viewBox="0 0 5 5"><path d="M0.5 0.5 L4.5 0.5 L2.5 4.2Z" fill="none" stroke="#777" stroke-width="0.6"/></svg>
<span class="t" style="left:369.07px;top:294.33px;font-size:7.3px;color:#222;transform:scaleX(0.8918);">Summary</span>
<span class="t" style="left:450.27px;top:294.33px;font-size:7.3px;color:#222;transform:scaleX(0.8918);">Status</span>
<div style="left:245.5px;top:314.03px;width:234.4px;height:0.8px;background:#d3d6e2;"></div>
<svg style="left:263px;top:304.3px" width="8" height="10" viewBox="0 0 8 10"><path d="M0.6 0.6 L4.8 0.6 L7 2.8 L7 9.2 L0.6 9.2Z" fill="#fff" stroke="#6a6a6a" stroke-width="0.7"/><path d="M4.8 0.6 L4.8 2.8 L7 2.8" fill="none" stroke="#6a6a6a" stroke-width="0.6"/></svg>
<div style="left:275.8px;top:302.8px;width:51px;height:11px;overflow:hidden">
<span class="t" style="left:0.50px;top:2.43px;font-size:7.3px;color:#222;transform:scaleX(0.9445);">01/03/2007 12:4</span>
</div>
<div style="left:329.8px;top:302.8px;width:108.9px;height:11px;overflow:hidden">
<span class="t" style="left:0.00px;top:2.43px;font-size:7.3px;color:#222;transform:scaleX(0.9688);">Ofc Visit</span>
</div>
<span class="t" style="left:441.30px;top:305.23px;font-size:7.3px;color:#222;transform:scaleX(0.9253);">Signed</span>
<div style="left:245.5px;top:326.06px;width:234.4px;height:0.8px;background:#d3d6e2;"></div>
<svg style="left:263px;top:316.33px" width="8" height="10" viewBox="0 0 8 10"><path d="M0.6 0.6 L4.8 0.6 L7 2.8 L7 9.2 L0.6 9.2Z" fill="#fff" stroke="#6a6a6a" stroke-width="0.7"/><path d="M4.8 0.6 L4.8 2.8 L7 2.8" fill="none" stroke="#6a6a6a" stroke-width="0.6"/></svg>
<div style="left:275.8px;top:314.83px;width:51px;height:11px;overflow:hidden">
<span class="t" style="left:0.50px;top:2.43px;font-size:7.3px;color:#222;transform:scaleX(0.9445);">07/28/2004 6:22</span>
</div>
<div style="left:329.8px;top:314.83px;width:108.9px;height:11px;overflow:hidden">
<span class="t" style="left:0.00px;top:2.43px;font-size:7.3px;color:#222;transform:scaleX(0.9072);">Lab Rpt: Metabolic Panel</span>
</div>
<span class="t" style="left:441.30px;top:317.26px;font-size:7.3px;color:#222;transform:scaleX(0.9253);">Unsigned</span>
<div style="left:245.5px;top:338.09px;width:234.4px;height:0.8px;background:#d3d6e2;"></div>
<svg style="left:263px;top:328.36px" width="8" height="10" viewBox="0 0 8 10"><path d="M0.6 0.6 L4.8 0.6 L7 2.8 L7 9.2 L0.6 9.2Z" fill="#fff" stroke="#6a6a6a" stroke-width="0.7"/><path d="M4.8 0.6 L4.8 2.8 L7 2.8" fill="none" stroke="#6a6a6a" stroke-width="0.6"/></svg>
<div style="left:275.8px;top:326.86px;width:51px;height:11px;overflow:hidden">
<span class="t" style="left:0.50px;top:2.43px;font-size:7.3px;color:#222;transform:scaleX(0.9445);">04/02/2003 4:23</span>
</div>
<div style="left:329.8px;top:326.86px;width:108.9px;height:11px;overflow:hidden">
<span class="t" style="left:0.00px;top:2.43px;font-size:7.3px;color:#222;transform:scaleX(0.9540);">Ofc Visit: Physical</span>
</div>
<span class="t" style="left:441.30px;top:329.29px;font-size:7.3px;color:#222;transform:scaleX(0.9253);">Signed</span>
<div style="left:245.5px;top:350.12px;width:234.4px;height:0.8px;background:#d3d6e2;"></div>
<svg style="left:263px;top:340.39px" width="8" height="10" viewBox="0 0 8 10"><path d="M0.6 0.6 L4.8 0.6 L7 2.8 L7 9.2 L0.6 9.2Z" fill="#fff" stroke="#6a6a6a" stroke-width="0.7"/><path d="M4.8 0.6 L4.8 2.8 L7 2.8" fill="none" stroke="#6a6a6a" stroke-width="0.6"/></svg>
<div style="left:275.8px;top:338.89px;width:51px;height:11px;overflow:hidden">
<span class="t" style="left:0.50px;top:2.43px;font-size:7.3px;color:#222;transform:scaleX(0.9445);">09/10/2001 6:00</span>
</div>
<div style="left:329.8px;top:338.89px;width:108.9px;height:11px;overflow:hidden">
<span class="t" style="left:0.00px;top:2.43px;font-size:7.3px;color:#222;transform:scaleX(0.9076);">Lab Rpt: Lipids</span>
</div>
<span class="t" style="left:441.30px;top:341.32px;font-size:7.3px;color:#222;transform:scaleX(0.9253);">Signed</span>
<div style="left:245.5px;top:362.15px;width:234.4px;height:0.8px;background:#d3d6e2;"></div>
<svg style="left:263px;top:352.42px" width="8" height="10" viewBox="0 0 8 10"><path d="M0.6 0.6 L4.8 0.6 L7 2.8 L7 9.2 L0.6 9.2Z" fill="#fff" stroke="#6a6a6a" stroke-width="0.7"/><path d="M4.8 0.6 L4.8 2.8 L7 2.8" fill="none" stroke="#6a6a6a" stroke-width="0.6"/></svg>
<div style="left:275.8px;top:350.92px;width:51px;height:11px;overflow:hidden">
<span class="t" style="left:0.50px;top:2.43px;font-size:7.3px;color:#222;transform:scaleX(0.9445);">09/07/2001 10:5</span>
</div>
<div style="left:329.8px;top:350.92px;width:108.9px;height:11px;overflow:hidden">
<span class="t" style="left:0.00px;top:2.43px;font-size:7.3px;color:#222;transform:scaleX(0.9507);">Ofc Visit: Routine Visit</span>
</div>
<span class="t" style="left:441.30px;top:353.35px;font-size:7.3px;color:#222;transform:scaleX(0.9253);">Signed</span>
<div style="left:245.5px;top:374.18px;width:234.4px;height:0.8px;background:#d3d6e2;"></div>
<svg style="left:263px;top:364.45px" width="8" height="10" viewBox="0 0 8 10"><path d="M0.6 0.6 L4.8 0.6 L7 2.8 L7 9.2 L0.6 9.2Z" fill="#fff" stroke="#6a6a6a" stroke-width="0.7"/><path d="M4.8 0.6 L4.8 2.8 L7 2.8" fill="none" stroke="#6a6a6a" stroke-width="0.6"/></svg>
<div style="left:275.8px;top:362.95px;width:51px;height:11px;overflow:hidden">
<span class="t" style="left:0.50px;top:2.43px;font-size:7.3px;color:#222;transform:scaleX(0.9445);">10/14/2000 6:00</span>
</div>
<div style="left:329.8px;top:362.95px;width:108.9px;height:11px;overflow:hidden">
<span class="t" style="left:0.00px;top:2.43px;font-size:7.3px;color:#222;transform:scaleX(0.9076);">Lab Rpt: Lipids</span>
</div>
<span class="t" style="left:441.30px;top:365.38px;font-size:7.3px;color:#222;transform:scaleX(0.9253);">Signed</span>
<div style="left:245.5px;top:386.21px;width:234.4px;height:0.8px;background:#d3d6e2;"></div>
<svg style="left:263px;top:376.48px" width="8" height="10" viewBox="0 0 8 10"><path d="M0.6 0.6 L4.8 0.6 L7 2.8 L7 9.2 L0.6 9.2Z" fill="#fff" stroke="#6a6a6a" stroke-width="0.7"/><path d="M4.8 0.6 L4.8 2.8 L7 2.8" fill="none" stroke="#6a6a6a" stroke-width="0.6"/></svg>
<div style="left:275.8px;top:374.98px;width:51px;height:11px;overflow:hidden">
<span class="t" style="left:0.50px;top:2.43px;font-size:7.3px;color:#222;transform:scaleX(0.9445);">10/13/2000 10:1</span>
</div>
<div style="left:329.8px;top:374.98px;width:108.9px;height:11px;overflow:hidden">
<span class="t" style="left:0.00px;top:2.43px;font-size:7.3px;color:#222;transform:scaleX(0.9476);">Ofc Visit: F/u visit</span>
</div>
<span class="t" style="left:441.30px;top:377.41px;font-size:7.3px;color:#222;transform:scaleX(0.9253);">Signed</span>
<div style="left:245.5px;top:398.24px;width:234.4px;height:0.8px;background:#d3d6e2;"></div>
<svg style="left:263px;top:388.51px" width="8" height="10" viewBox="0 0 8 10"><path d="M0.6 0.6 L4.8 0.6 L7 2.8 L7 9.2 L0.6 9.2Z" fill="#fff" stroke="#6a6a6a" stroke-width="0.7"/><path d="M4.8 0.6 L4.8 2.8 L7 2.8" fill="none" stroke="#6a6a6a" stroke-width="0.6"/></svg>
<div style="left:275.8px;top:387.01px;width:51px;height:11px;overflow:hidden">
<span class="t" style="left:0.50px;top:2.43px;font-size:7.3px;color:#222;transform:scaleX(0.9445);">09/21/2000 9:30</span>
</div>
<div style="left:329.8px;top:387.01px;width:108.9px;height:11px;overflow:hidden">
<span class="t" style="left:0.00px;top:2.43px;font-size:7.3px;color:#222;transform:scaleX(0.9368);">Lab Rpt: CBC w/o Differential</span>
</div>
<span class="t" style="left:441.30px;top:389.44px;font-size:7.3px;color:#222;transform:scaleX(0.9253);">Signed</span>
<div style="left:245.5px;top:410.27px;width:234.4px;height:0.8px;background:#d3d6e2;"></div>
<svg style="left:263px;top:400.54px" width="8" height="10" viewBox="0 0 8 10"><path d="M0.6 0.6 L4.8 0.6 L7 2.8 L7 9.2 L0.6 9.2Z" fill="#fff" stroke="#6a6a6a" stroke-width="0.7"/><path d="M4.8 0.6 L4.8 2.8 L7 2.8" fill="none" stroke="#6a6a6a" stroke-width="0.6"/></svg>
<div style="left:275.8px;top:399.04px;width:51px;height:11px;overflow:hidden">
<span class="t" style="left:0.50px;top:2.43px;font-size:7.3px;color:#222;transform:scaleX(0.9445);">09/20/2000 9:30</span>
</div>
<div style="left:329.8px;top:399.04px;width:108.9px;height:11px;overflow:hidden">
<span class="t" style="left:0.00px;top:2.43px;font-size:7.3px;color:#222;transform:scaleX(0.9072);">Lab Rpt: Metabolic Panel</span>
</div>
<span class="t" style="left:441.30px;top:401.47px;font-size:7.3px;color:#222;transform:scaleX(0.9253);">Signed</span>
<div style="left:245.5px;top:422.3px;width:234.4px;height:0.8px;background:#d3d6e2;"></div>
<svg style="left:263px;top:412.57px" width="8" height="10" viewBox="0 0 8 10"><path d="M0.6 0.6 L4.8 0.6 L7 2.8 L7 9.2 L0.6 9.2Z" fill="#fff" stroke="#6a6a6a" stroke-width="0.7"/><path d="M4.8 0.6 L4.8 2.8 L7 2.8" fill="none" stroke="#6a6a6a" stroke-width="0.6"/></svg>
<div style="left:275.8px;top:411.07px;width:51px;height:11px;overflow:hidden">
<span class="t" style="left:0.50px;top:2.43px;font-size:7.3px;color:#222;transform:scaleX(0.9445);">09/19/2000 6:00</span>
</div>
<div style="left:329.8px;top:411.07px;width:108.9px;height:11px;overflow:hidden">
<span class="t" style="left:0.00px;top:2.43px;font-size:7.3px;color:#222;transform:scaleX(0.8827);">Lab Rpt: CPK</span>
</div>
<span class="t" style="left:441.30px;top:413.50px;font-size:7.3px;color:#222;transform:scaleX(0.9253);">Signed</span>
<div style="left:245.5px;top:434.33px;width:234.4px;height:0.8px;background:#d3d6e2;"></div>
<svg style="left:263px;top:424.6px" width="8" height="10" viewBox="0 0 8 10"><path d="M0.6 0.6 L4.8 0.6 L7 2.8 L7 9.2 L0.6 9.2Z" fill="#fff" stroke="#6a6a6a" stroke-width="0.7"/><path d="M4.8 0.6 L4.8 2.8 L7 2.8" fill="none" stroke="#6a6a6a" stroke-width="0.6"/></svg>
<div style="left:275.8px;top:423.1px;width:51px;height:11px;overflow:hidden">
<span class="t" style="left:0.50px;top:2.43px;font-size:7.3px;color:#222;transform:scaleX(0.9445);">09/16/2000 9:44</span>
</div>
<div style="left:329.8px;top:423.1px;width:108.9px;height:11px;overflow:hidden">
<span class="t" style="left:0.00px;top:2.43px;font-size:7.3px;color:#222;transform:scaleX(0.9425);">Ofc Visit: Initial cardiology consultat</span>
</div>
<span class="t" style="left:441.30px;top:425.53px;font-size:7.3px;color:#222;transform:scaleX(0.9253);">Signed</span>
<div style="left:327px;top:302.8px;width:0.8px;height:132.33px;background:#d3d6e2;"></div>
<div style="left:439px;top:302.8px;width:0.8px;height:132.33px;background:#d3d6e2;"></div>
<div style="left:479.9px;top:302.8px;width:0.8px;height:132.33px;background:#d3d6e2;"></div>
<svg style="left:244.7px;top:302.1px" width="236.2" height="12.93"><rect x="1" y="1" width="234.2" height="10.93" rx="0.8" fill="none" stroke="#8e8e96" stroke-width="0.7"/></svg>
<svg style="left:250px;top:315.33px" width="10" height="10" viewBox="0 0 10 10"><g transform="rotate(42 5 5)"><rect x="3.9" y="-0.4" width="2.2" height="8" fill="#f0e04a" stroke="#222" stroke-width="0.6"/><path d="M3.9 7.6 L5 10.2 L6.1 7.6Z" fill="#f3e2b0" stroke="#222" stroke-width="0.5"/><rect x="3.9" y="-0.4" width="2.2" height="1.6" fill="#333" stroke="#222" stroke-width="0.5"/></g></svg>
<svg style="left:466px;top:279.3px" width="10" height="10" viewBox="0 0 10 10"><g transform="rotate(42 5 5)"><rect x="3.9" y="-0.4" width="2.2" height="8" fill="#f0e04a" stroke="#222" stroke-width="0.6"/><path d="M3.9 7.6 L5 10.2 L6.1 7.6Z" fill="#f3e2b0" stroke="#222" stroke-width="0.5"/><rect x="3.9" y="-0.4" width="2.2" height="1.6" fill="#333" stroke="#222" stroke-width="0.5"/></g></svg>
<div style="left:517.2px;top:358.8px;width:98.8px;height:116.8px;background:#fbfbfd;"></div>
<svg style="left:521.2px;top:360.2px" width="90.6" height="113.8" viewBox="0 0 90.6 113.8">
<defs>
<filter id="b1" x="-20%" y="-20%" width="140%" height="140%"><feGaussianBlur stdDeviation="1.6"/></filter>
<filter id="b2" x="-20%" y="-20%" width="140%" height="140%"><feGaussianBlur stdDeviation="0.8"/></filter>
<filter id="b3" x="-30%" y="-30%" width="160%" height="160%"><feGaussianBlur stdDeviation="3"/></filter>
<filter id="b4" x="-30%" y="-30%" width="160%" height="160%"><feGaussianBlur stdDeviation="0.5"/></filter>
<linearGradient id="bgg" x1="0" y1="0" x2="1" y2="0"><stop offset="0" stop-color="#555a5b"/><stop offset="0.3" stop-color="#484c4f"/><stop offset="1" stop-color="#3c3f43"/></linearGradient>
<radialGradient id="skin" cx="0.45" cy="0.4" r="0.65"><stop offset="0" stop-color="#dbb5a0"/><stop offset="0.55" stop-color="#cfa38d"/><stop offset="0.85" stop-color="#bb8a74"/><stop offset="1" stop-color="#9a6a56"/></radialGradient>
<linearGradient id="hairg" x1="0" y1="0" x2="0" y2="1"><stop offset="0" stop-color="#1e1614"/><stop offset="0.45" stop-color="#2e1f1a"/><stop offset="1" stop-color="#5a3424"/></linearGradient>
<clipPath id="pc"><rect x="0" y="0" width="90.6" height="113.8"/></clipPath>
</defs>
<g clip-path="url(#pc)">
<rect width="90.6" height="113.8" fill="url(#bgg)"/>
<ellipse cx="2" cy="60" rx="8" ry="20" fill="#6c6e70" filter="url(#b3)"/>
<!-- shirt -->
<path d="M-2 80 Q4 75 13 76 L26 92 L36 116 L62 116 L68 94 L71 77 Q82 73 93 79 L93 116 L-2 116Z" fill="#507cb0" filter="url(#b2)"/>
<path d="M68 90 Q78 78 92 82 L92 116 L64 116Z" fill="#6b99c9" filter="url(#b3)"/>
<path d="M-2 84 Q6 78 14 82 L28 116 L-2 116Z" fill="#4572ad" filter="url(#b3)"/>
<path d="M12 80 Q16 96 30 108 L34 116 L22 116 Q12 100 10 84Z" fill="#36468c" filter="url(#b1)" opacity="0.85"/>
<path d="M4 96 L20 100 M72 100 L88 95" stroke="#7eaadb" stroke-width="1.6" filter="url(#b1)" opacity="0.55"/>
<!-- tshirt & collar -->
<path d="M33 113.8 L36 107 Q48 104 62 107 L63 113.8Z" fill="#e6e6e8" filter="url(#b4)"/>
<path d="M28 104 L36 113.8 L24 113.8Z" fill="#2f3f74" filter="url(#b2)"/>
<path d="M68 102 L62 113.8 L74 113.8Z" fill="#3a5f95" filter="url(#b2)"/>
<!-- ears -->
<ellipse cx="8" cy="50" rx="4" ry="9.5" fill="#c08c76" filter="url(#b2)"/>
<ellipse cx="81" cy="50" rx="3.6" ry="9.5" fill="#b07a66" filter="url(#b2)"/>
<!-- face -->
<path d="M12 42 Q11 16 45 14 Q79 16 78.5 44 Q79 64 73 80 Q65 98 56 103 Q46 107 36 103.5 Q22 96 15.5 80 Q11.5 64 12 42Z" fill="url(#skin)" filter="url(#b2)"/>
<!-- neck shadow -->
<path d="M30 100 Q46 109 62 99 Q56 107 46 107.5 Q36 107 30 100Z" fill="#93624f" filter="url(#b1)" opacity="0.8"/>
<!-- cheeks -->
<ellipse cx="24" cy="66" rx="7" ry="6" fill="#cd8f7a" filter="url(#b1)" opacity="0.5"/>
<ellipse cx="67" cy="66" rx="7" ry="6" fill="#c98a76" filter="url(#b1)" opacity="0.5"/>
<!-- highlights -->
<ellipse cx="42" cy="31" rx="20" ry="8.5" fill="#e2bda9" filter="url(#b1)" opacity="0.8"/>
<ellipse cx="43.5" cy="59" rx="4.5" ry="8" fill="#e6c0aa" filter="url(#b1)" opacity="0.8"/>
<ellipse cx="46" cy="90" rx="11" ry="6" fill="#d9ae98" filter="url(#b1)" opacity="0.7"/>
<!-- hair -->
<path d="M6.5 42 Q0 20 10 7 Q26 -3 52 0 Q76 1 83 17 Q87 32 81.5 46 Q79 33 73 25 Q66 17 46 15.5 Q30 17 22 22 Q14 28 12.5 40 Q10 38 6.5 42Z" fill="url(#hairg)" filter="url(#b2)"/>
<path d="M16 26 Q30 13 50 13 Q68 14 74 26 Q64 17.5 46 17.5 Q28 18 16 30Z" fill="#6e3f2a" filter="url(#b1)" opacity="0.9"/>
<rect x="0" y="0" width="90.6" height="0.9" fill="#15181a"/>
<!-- eyes/brows -->
<path d="M20 44.5 Q28 41.5 37 44.5" stroke="#8a5e4c" stroke-width="1.6" fill="none" filter="url(#b2)"/>
<path d="M51 44 Q60 41 69 44" stroke="#8a5e4c" stroke-width="1.6" fill="none" filter="url(#b2)"/>
<ellipse cx="29.5" cy="50" rx="3.6" ry="1.2" fill="#6c473b" filter="url(#b4)"/>
<ellipse cx="60" cy="49.5" rx="3.6" ry="1.2" fill="#6c473b" filter="url(#b4)"/>
<!-- glasses -->
<ellipse cx="29.5" cy="52" rx="10.5" ry="7.4" fill="none" stroke="#ecdccc" stroke-width="0.6" opacity="0.7"/>
<ellipse cx="61" cy="51.5" rx="10.5" ry="7.4" fill="none" stroke="#ecdccc" stroke-width="0.6" opacity="0.7"/>
<path d="M40 50 Q45 47.5 50.5 50 M19 50 L9 47 M71.5 49.5 L82 45.5" stroke="#d8c8b8" stroke-width="0.6" fill="none" opacity="0.7"/>
<!-- nose shadow -->
<path d="M38 65.5 Q44 69 51 65.5" stroke="#a8725e" stroke-width="1.2" fill="none" filter="url(#b2)"/>
<!-- mustache -->
<path d="M31 72.5 Q46 67.5 61 72 Q62 74 60.5 74.5 Q46 71 31.5 75.5Z" fill="#9a6a54" filter="url(#b2)"/>
<!-- mouth -->
<path d="M35 74.5 Q46 73.6 57 74 Q52 79.5 46 79.5 Q39 79.5 35 74.5Z" fill="#ebe0d8" filter="url(#b4)"/>
<path d="M34 77 Q46 84.5 58 76.5 Q52 82.5 46 82.5 Q39 82.5 34 77Z" fill="#b07365" filter="url(#b2)"/>
<!-- smile lines -->
<path d="M27 66 Q25 76 30 82 M64 65 Q67 75 62 81" stroke="#a87560" stroke-width="1" fill="none" filter="url(#b2)" opacity="0.7"/>
</g></svg>
<div style="left:0px;top:475.6px;width:650px;height:12.4px;background:#5b6aa6;background:linear-gradient(#b4bbdb 0%,#7a86b9 10%,#6472aa 35%,#57659e 85%,#47548a 100%);"></div>
<span class="t" style="left:0.80px;top:478.58px;font-size:7.2px;color:#141a50;transform:scaleX(0.9326);">For Help, press F1</span>
<span class="t" style="left:453.60px;top:478.58px;font-size:7.2px;color:#141a50;transform:scaleX(0.9484);white-space:pre;">LinkLogic: Jobs =   0; Errors =   0</span>
<svg style="left:565px;top:477.8px" width="27" height="9.5" viewBox="0 0 27 9.5"><circle cx="3.2" cy="4.4" r="2.6" fill="#c62828"/><path d="M3 8 L4 3 L8 2 L10 8Z" fill="#f1ec7a"/><circle cx="7.4" cy="5" r="2.4" fill="#f6f2a0"/><rect x="17.4" y="0.8" width="1.2" height="7.6" fill="#e8e23a"/><circle cx="22" cy="5" r="3" fill="#eef0f8" stroke="#9aa2c6" stroke-width="0.6"/><rect x="20" y="3" width="2" height="2" fill="#4a5a9a"/></svg>
<div style="left:595px;top:477.6px;width:0.8px;height:10px;background:#707db3;"></div>
<div style="left:610px;top:477.6px;width:0.8px;height:10px;background:#707db3;"></div>
<div style="left:629px;top:477.6px;width:0.8px;height:10px;background:#707db3;"></div>
</div></body></html>
